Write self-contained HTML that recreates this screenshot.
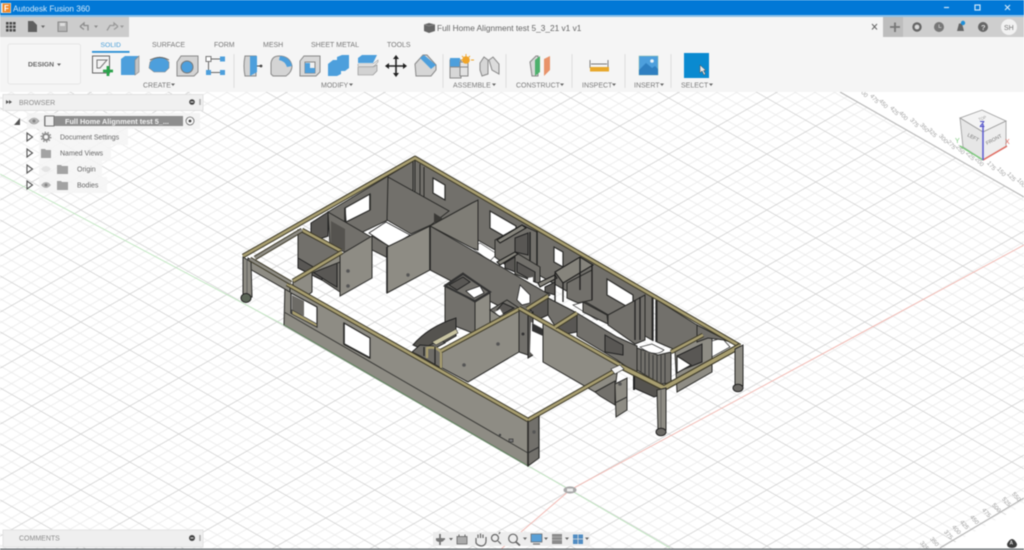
<!DOCTYPE html>
<html><head><meta charset="utf-8"><style>
html,body{margin:0;padding:0;width:1024px;height:550px;overflow:hidden;background:#fff}
svg{position:absolute;left:0;top:0;filter:blur(.45px)}
text{font-family:"Liberation Sans",sans-serif}
.w1{fill:#8e8c84;stroke:#2a2a28;stroke-width:1}
.w2{fill:#72706b;stroke:#2a2a28;stroke-width:1}
.w3{fill:#595754;stroke:#222;stroke-width:1}
.gb{fill:#86847c;stroke:#1f1f1e;stroke-width:1.1}
.h{fill:#fff;stroke:#2a2a28;stroke-width:1.2}
.bo{fill:none;stroke:#3f3b2a;stroke-width:4.6;stroke-linejoin:round}
.bi{fill:none;stroke:#a89e70;stroke-width:2.6;stroke-linejoin:round}
.t{font-size:7px;fill:#7a7a7a}
.r{font-size:6px;fill:#a0a0a0;text-anchor:middle}
.b{fill:#4d9fdc}
</style></head><body>
<svg width="1024" height="550" viewBox="0 0 1024 550">
<defs>
<pattern id="grid" width="50" height="50" patternUnits="userSpaceOnUse" patternTransform="matrix(.98 -.56 .98 .56 570 490)">
<path d="M10 0V50M20 0V50M30 0V50M40 0V50M0 10H50M0 20H50M0 30H50M0 40H50" stroke="#ebebeb" stroke-width=".9" fill="none"/>
<path d="M0 0V50M0 0H50" stroke="#cfcfcf" stroke-width="1.5" fill="none"/>
</pattern>
<clipPath id="gc"><polygon points="-10,-10 680,-10 840,92 1300,355 880,583 -10,583"/></clipPath>
</defs>
<rect width="1024" height="550" fill="#fff"/>
<rect width="1024" height="550" fill="url(#grid)" clip-path="url(#gc)"/>
<path d="M840 92L1024 197M940 548L1024 498" stroke="#b5b5b5" stroke-width="1.1" fill="none"/>
<path d="M500 550L570 490L750 393L1024 245" stroke="#f1b5ae" stroke-width=".9" fill="none"/>
<path d="M0 174L284 325M528 466L570 490L670 548" stroke="#bfe6bf" stroke-width=".9" fill="none"/>

<!-- ruler labels -->
<g class="r">
<text transform="translate(862,94) rotate(50)">500</text><text transform="translate(873,100) rotate(50)">475</text><text transform="translate(882,105) rotate(50)">450</text><text transform="translate(893,112) rotate(50)">425</text><text transform="translate(902,117) rotate(50)">400</text><text transform="translate(913,124) rotate(50)">375</text><text transform="translate(923,129) rotate(50)">350</text><text transform="translate(931,134) rotate(50)">325</text><text transform="translate(942,140) rotate(50)">300</text><text transform="translate(950,146) rotate(50)">275</text><text transform="translate(959,151) rotate(50)">250</text><text transform="translate(969,157) rotate(50)">225</text><text transform="translate(978,163) rotate(50)">200</text><text transform="translate(990,167) rotate(50)">175</text><text transform="translate(1000,173) rotate(50)">150</text><text transform="translate(1010,178) rotate(50)">125</text><text transform="translate(1020,184) rotate(50)">100</text>
<text transform="translate(923,547) rotate(50)">325</text><text transform="translate(933,543) rotate(50)">350</text><text transform="translate(947,536) rotate(50)">375</text><text transform="translate(955,531) rotate(50)">400</text><text transform="translate(963,526) rotate(50)">425</text><text transform="translate(973,521) rotate(50)">450</text><text transform="translate(985,514) rotate(50)">475</text><text transform="translate(995,509) rotate(50)">500</text><text transform="translate(1005,503) rotate(50)">525</text><text transform="translate(1015,498) rotate(50)">550</text>
</g>

<!-- MODEL -->
<g>
<!-- back-right inner face -->
<polygon class="w2" points="415,160 652,296 652,340 415,204"/>
<!-- back-left inner face -->
<polygon class="w2" points="328,212 415,160 415,203 388,220 350,238"/>
<path d="M413 160V193M420 164V197M424 167V200" stroke="#2a2a28" stroke-width="1" fill="none"/>
<polygon class="h" points="345,208 370,194 370,210 346,222"/>
<path d="M345 208V222M370 194V210" stroke="#2a2a28" stroke-width="1.6"/>
<polygon class="h" points="433,178 445,185 445,200 433,193"/>
<polygon class="h" points="490,211 516,226 516,243 490,228"/>
<polygon class="h" points="554,247 563,252 563,267 554,262"/>
<polygon class="h" points="607,279 633,295 633,310 607,295"/>
<!-- left rooms -->
<polygon class="w3" points="311,223 328,212 328,236 311,242"/>
<polygon class="w2" points="328,212 371,237 345,252 330,246"/>
<polygon points="331,221 345,229 345,251 331,245" fill="#55534f"/>
<polygon class="w2" points="388,177 449,211 431,225 411,234 387,220"/>
<polygon points="434,213 442,218 442,226 434,222" fill="#3a3936"/>
<polygon points="369,233 386,222 410,235 390,247" fill="#fff" stroke="#222" stroke-width=".8"/>
<polygon class="w2" points="372,236 392,248 392,260 372,250"/>
<polygon class="w2" points="298,230 340,252 340,292 322,280 298,268"/>
<polygon class="w3" points="298,258 322,272 322,280 298,268"/>
<polygon class="w3" points="313,272 337,262 337,287 330,283"/>
<polygon class="w1" points="340,255 372,236 372,278 340,296"/>
<circle cx="348" cy="271" r="1.8" fill="#555"/><circle cx="348" cy="286" r="1.8" fill="#555"/>
<polygon class="w1" points="293,280 340,253 340,262 312,273 312,292 293,307"/>
<!-- white floor behind long wall -->
<polygon points="472,248 480,243 497,254 490,261" fill="#fff" stroke="#333" stroke-width=".6"/>
<!-- upper middle blocks (grey frames) -->
<polygon class="w2" points="495,240 522,225 537,232 537,282 515,272 495,257"/>
<polygon class="w3" points="515,238 528,233 528,255 515,252"/>
<polygon class="gb" points="497,240 522,225 526,228 500,243"/>
<path d="M530 232V280M537 231V282" stroke="#1f1f1e" stroke-width="1.4"/>
<polygon class="w3" points="505,263 515,257 515,272 505,268"/>
<polygon class="w2" points="515,252 540,267 540,284 515,274"/>
<polygon class="gb" points="497,262 515,252 518,254 500,265"/>
<polygon class="w3" points="517,262 535,272 535,282 517,272"/>
<polygon points="528,278 533,277 533,283 528,281" fill="#fff"/>
<polygon class="w3" points="545,287 555,282 555,295 545,292"/>
<polygon class="gb" points="538,283 555,275 557,278 540,287"/>
<polygon class="w2" points="567,283 592,270 592,300 578,303 567,298"/>
<polygon class="gb" points="555,272 580,257 593,265 563,283"/>
<path d="M555 273V307M563 282V302M580 257V290M592 265V300" stroke="#1f1f1e" stroke-width="1.3"/>
<polygon points="573,305 584,302 607,315 597,320" fill="#fff" stroke="#333" stroke-width=".7"/>
<polygon class="w2" points="583,302 607,315 608,324 583,312"/>
<polygon class="w2" points="608,315 645,295 645,340 635,344 608,325"/>
<path d="M635 300V340M640 297V340M653 298V341M656 300V342" stroke="#222" stroke-width="1.3"/>
<polygon class="w2" points="657,300 697,325 697,345 680,352 657,342"/>
<!-- diagonal wall and long wall -->
<polygon class="w1" points="430,226 472,203 478,200 478,250 472,248" style="fill:#7f7d76"/>
<polygon class="w2" points="430,226 472,250 550,295 522,318 430,270"/>
<polygon points="520,285 530,295 530,303 522,305 517,300" fill="#fff" stroke="#222" stroke-width=".8"/>
<polygon class="w1" points="387,247 430,226 430,270 387,293"/>
<circle cx="408" cy="275" r="1.7" fill="#555"/>
<path d="M430 226V270M387 247V293" stroke="#222" stroke-width="1.6"/>
<!-- rooms behind front right wall -->
<polygon class="w3" points="530,309 548,298 548,315 537,320"/>
<polygon class="w2" points="548,298 575,312 555,326 548,315"/>
<polygon class="w3" points="556,327 577,315 577,332 566,334"/>
<polygon class="w2" points="577,313 617,337 637,346 637,374 617,360 577,336"/>
<polygon class="w3" points="605,335 623,345 623,355 605,352"/>
<!-- bathroom blocks -->
<polygon class="w2" points="445,285 475,302 475,334 445,322"/>
<polygon class="w1" points="475,302 490,293 490,326 475,334"/>
<polygon class="w2" points="463,273 490,292 475,302 445,285"/>
<polygon class="w3" points="449,285 463,277 470,282 457,290"/>
<polygon points="466,291 480,286 484,293 474,298" fill="#fff" stroke="#222" stroke-width=".8"/>
<path d="M445 286L463 274L490 292L475 301Z" fill="none" stroke="#333" stroke-width="2"/>
<polygon class="w2" points="490,310 507,300 519,308 502,318"/>
<polygon class="w3" points="503,303 514,308 503,314 497,310"/>
<polygon points="495,312 500,309 503,314 499,316" fill="#fff"/>
<polygon class="w1" points="490,310 502,318 502,328 490,322"/>
<!-- stairs -->
<path d="M413 345Q428 327 456 318L456 336L428 352Z" fill="#55534f" stroke="#222"/>
<polygon class="w2" points="420,350 440,340 445,343 428,352"/>
<polygon points="432,342 456,329 458,333 436,345" fill="#c9c4a2" stroke="#333" stroke-width=".6"/>
<!-- SE room wall -->
<polygon class="w1" points="442,350 519,310 519,352 468,382 442,368"/>
<circle cx="464" cy="365" r="1.8" fill="#555"/><circle cx="498" cy="344" r="1.8" fill="#555"/>
<!-- right door pier -->
<polygon class="w2" points="519,310 528,315 528,355 519,352"/>
<polygon class="w3" points="528,315 533,312 533,355 528,358"/>
<circle cx="523" cy="334" r="1.5" fill="#333"/>
<polygon points="531,322 543,330 543,365 530,352" fill="#fff"/>
<polygon points="532,323 543,329 543,336 532,331" fill="#333"/>
<polygon class="w1" points="543,323 618,365 616,382 595,392 543,362"/>
<!-- pier & wall -->
<polygon class="w2" points="595,392 615,381 615,405 600,396"/>
<polygon class="w1" points="615,384 627,378 627,410 616,417"/>
<path d="M615 403L627 397" stroke="#333"/>
<circle cx="620" cy="384" r="1.8" fill="#555"/>
<!-- under bay -->
<polygon points="634,372 660,384 660,395 654,397 634,388" fill="#55534f" stroke="#222"/>
<path d="M634 375V390" stroke="#222" stroke-width="2"/>
<!-- curved bay -->
<polygon class="w2" points="637,348 658,355 671,352 671,383 660,384 637,370"/>
<path d="M641 350V372M645 352V375M649 353V378M653 355V380M657 355V382M661 355V383M665 354V383" stroke="#3a3a37" stroke-width="1"/>
<path d="M640 347Q655 358 664 350L652 344Z" fill="#fff" stroke="#333" stroke-width=".7"/>
<!-- right bay window -->
<polygon class="w1" points="675,352 702,337 712,333 712,372 677,392"/>
<polygon class="w3" points="677,356 702,344 702,362 677,372"/>
<polygon class="h" points="677,356 691,365 677,373"/>
<polygon points="712,341 722,338 730,347 712,357" fill="#fff" stroke="#333" stroke-width=".8"/>
<polygon class="w2" points="697,325 730,342 724,340 708,338 697,342"/>
<!-- front wall -->
<polygon class="w1" points="285,283 528,420 528,466 284,325"/>
<path d="M284 312L528 453" stroke="#3c3c39" stroke-width="1"/>
<path d="M284 325L528 466" stroke="#6a8a68" stroke-width="1.2"/>
<polygon class="w2" points="528,420 539,414 539,458 528,466"/>
<path d="M528 420V466" stroke="#2a2a28" stroke-width="1.6"/>
<path d="M539 414V458" stroke="#2a2a28" stroke-width="1.2"/>
<path d="M528 453L539 447" stroke="#333" stroke-width="1"/>
<circle cx="534" cy="432" r="1.7" fill="#555"/>
<polygon points="291,293 317,307 317,327 291,313" fill="#fff" stroke="#2a2a28" stroke-width="1.2"/>
<polygon points="292,295 304,301 304,316 292,312" fill="#6d6b66"/>
<polygon points="292,310 317,324 317,327 292,314" fill="#a89e70" stroke="#333" stroke-width=".7"/>
<polygon class="h" points="344,323 370,338 370,358 344,344"/>
<path d="M344 323V344M344 344L370 358" stroke="#2a2a28" stroke-width="1.6"/>
<circle cx="500" cy="435" r="1.2" fill="#444"/><rect x="509" y="439" width="4" height="3" fill="#777" stroke="#333" stroke-width=".7"/>
<!-- stair opening in front wall -->
<polygon points="412,352 420,356 441,368 441,350 433,346 420,345" fill="#6e6c67" stroke="#222"/>
<path d="M427 358V348Q436 346 441 352V368" fill="none" stroke="#a89e70" stroke-width="2.4"/>
<path d="M424 347V356M435 347V364" stroke="#222" stroke-width="1.2"/>
<!-- left lintel -->
<polygon class="w1" points="248,258 290,282 290,292 248,268"/>
<!-- left column -->
<polygon class="w1" points="243,257 251,262 252,297 243,297"/>
<path d="M247 260V297" stroke="#555" stroke-width=".8"/>
<ellipse cx="246" cy="298" rx="5" ry="4.5" fill="#5c6658" stroke="#222"/>
<!-- beams -->
<polyline class="bo" points="302,230 341,251"/><polyline class="bi" points="302,230 341,251"/>
<polyline class="bo" points="255,258 302,230"/><polyline class="bi" points="255,258 302,230" style="stroke:#8e8c84"/>
<polyline class="bo" points="243,256 415,158 740,346"/><polyline class="bi" points="243,256 415,158 740,346"/>
<polyline class="bo" points="293,281 342,252"/><polyline class="bi" points="293,281 342,252"/>
<polyline class="bo" points="441,351 519,309"/><polyline class="bi" points="441,351 519,309"/>
<polyline class="bo" points="519,308 620,365"/><polyline class="bi" points="519,308 620,365"/>
<polyline class="bo" points="527,309 548,296"/><polyline class="bi" points="527,309 548,296"/>
<polyline class="bo" points="555,327 577,313"/><polyline class="bi" points="555,327 577,313"/>
<polyline class="bo" points="671,352 703,335"/><polyline class="bi" points="671,352 703,335"/>
<polyline class="bo" points="618,369 528,420"/><polyline class="bi" points="618,369 528,420"/>
<polyline class="bo" points="287,284 528,420"/><polyline class="bi" points="287,284 528,420"/>
<polyline class="bo" points="250,259 291,283"/><polyline class="bi" points="250,259 291,283" style="stroke:#8e8c84"/>
<polyline class="bo" points="620,366 664,388 740,346" style="stroke-width:6"/><polyline class="bi" points="620,366 664,388 740,346" style="stroke-width:3.6"/>
<polygon points="611,369 620,365 624,369 615,374" fill="#f4f4f4" stroke="#222" stroke-width=".6"/>
<!-- bay columns -->
<polygon class="w1" points="735,349 743,345 743,386 735,386"/>
<ellipse cx="738" cy="388" rx="5" ry="3.8" fill="#6a6864" stroke="#222"/>
<polygon class="w1" points="657,390 666,388 666,430 658,430"/>
<path d="M661 390V430" stroke="#555" stroke-width=".7"/>
<ellipse cx="661" cy="432" rx="5" ry="3.8" fill="#6a6864" stroke="#222"/>
</g>

<!-- small axis marker -->
<ellipse cx="570" cy="490" rx="6.500" ry="3.600" fill="#a8a8a8"/>
<rect x="567" y="488.600" width="6" height="2.800" fill="#efefef"/>

<!-- title bar & toolbar -->
<rect x="0" y="0" width="1024" height="15" fill="#0278d6"/>
<rect x="0" y="15" width="1024" height="2" fill="#8dc0e8"/>
<rect x="0" y="17" width="1024" height="75" fill="#f5f5f5"/>
<rect x="1" y="3" width="10" height="10" fill="#f1f1f1"/><rect x="2.500" y="3.500" width="8" height="9" fill="#f08a2a"/>
<text x="4" y="11" font-size="8" font-weight="700" fill="#fff">F</text>
<text x="13" y="11.300" font-size="8.200" fill="#d8ebf9">Autodesk Fusion 360</text>
<path d="M944 7.500H949" stroke="#cfe6f8" stroke-width="1.200"/>
<rect x="975" y="5" width="5" height="5" fill="none" stroke="#cfe6f8" stroke-width="1.200"/>
<path d="M1005 5L1010 10M1010 5L1005 10" stroke="#cfe6f8" stroke-width="1.200"/>
<!-- quick bars -->
<rect x="0" y="17" width="129" height="20" fill="#cccccc"/>
<rect x="883" y="17" width="141" height="20" fill="#cecece"/>
<rect x="883" y="17" width="20" height="20" fill="#bdbdbd"/>
<g fill="#4a4a4a"><rect x="6" y="22" width="2.600" height="2.600"/><rect x="9.500" y="22" width="2.600" height="2.600"/><rect x="13" y="22" width="2.600" height="2.600"/><rect x="6" y="25.500" width="2.600" height="2.600"/><rect x="9.500" y="25.500" width="2.600" height="2.600"/><rect x="13" y="25.500" width="2.600" height="2.600"/><rect x="6" y="29" width="2.600" height="2.600"/><rect x="9.500" y="29" width="2.600" height="2.600"/><rect x="13" y="29" width="2.600" height="2.600"/></g>
<path d="M28 21H33L37 25V32H28Z" fill="#5f5f5f"/><path d="M41 25.500H45L43 28Z" fill="#666"/>
<rect x="58" y="22" width="9" height="9.500" fill="#b3b3b3" stroke="#8a8a8a"/><rect x="60" y="23" width="5" height="3" fill="#ddd"/>
<path d="M80 26.500L84 23V25.500H88V30.500M80 26.500L84 29.500" fill="none" stroke="#8c8c8c" stroke-width="1.300"/><path d="M94 25.500H98L96 28Z" fill="#8c8c8c"/>
<path d="M118 26.500L114 23V25.500H110L107 30.500M118 26.500L114 29.500" fill="none" stroke="#9a9a9a" stroke-width="1.300"/><path d="M120 25.500H124L122 28Z" fill="#9a9a9a"/>
<!-- doc title -->
<path d="M424 24.500L429 23L435 24.500V31L429 33L424 31Z" fill="#666"/><path d="M424 24.500L429 26L435 24.500" stroke="#999" fill="none" stroke-width=".6"/>
<text x="437" y="31" font-size="8.300" fill="#666">Full Home Alignment test 5_3_21 v1 v1</text>
<path d="M872 24L877 29.500M877 24L872 29.500" stroke="#666" stroke-width="1"/>
<path d="M895 22.500V32M890 27H900" stroke="#777" stroke-width="1.800"/>
<circle cx="917" cy="27" r="4.700" fill="#666"/><circle cx="917" cy="27" r="2.400" fill="#d8d8d8"/>
<circle cx="939" cy="27" r="5" fill="#777"/><path d="M939 24.500V27.500H941.500" stroke="#ccc" fill="none" stroke-width=".8"/>
<path d="M957 31L959 23.500H962L964 31Z" fill="#666"/><circle cx="963" cy="23" r="2.200" fill="#1f8fd8"/>
<circle cx="983" cy="27" r="5" fill="#666"/><text x="981" y="30" font-size="7.500" font-weight="700" fill="#ddd">?</text>
<circle cx="1009" cy="27" r="8" fill="#f2f2f2"/><text x="1004" y="30" font-size="7" fill="#777">SH</text>

<!-- tabs -->
<text x="100.500" y="47" font-size="6.800" fill="#4a9fd8">SOLID</text>
<rect x="92" y="51" width="37.500" height="1.800" fill="#2a8fd4"/>
<text x="152" y="47" class="t">SURFACE</text><text x="214" y="47" class="t">FORM</text><text x="263" y="47" class="t">MESH</text><text x="311" y="47" class="t">SHEET METAL</text><text x="387" y="47" class="t">TOOLS</text>
<rect x="8" y="44" width="72.500" height="40" rx="2" fill="#f6f6f6" stroke="#e6e6e6"/>
<text x="28" y="66.500" font-size="6.800" font-weight="700" fill="#666">DESIGN</text><path d="M57 63.500H61L59 66Z" fill="#666"/>
<g stroke="#dedede"><path d="M234 54V88M443 54V88M506 54V88M572 54V88M625 54V88M671 54V88"/></g>
<!-- labels -->
<text x="143" y="87.500" class="t">CREATE</text><path d="M171 83.500H175L173 86Z" fill="#666"/>
<text x="321" y="87.500" class="t">MODIFY</text><path d="M349 83.500H353L351 86Z" fill="#666"/>
<text x="453" y="87.500" class="t">ASSEMBLE</text><path d="M492 83.500H496L494 86Z" fill="#666"/>
<text x="516" y="87.500" class="t">CONSTRUCT</text><path d="M560 83.500H564L562 86Z" fill="#666"/>
<text x="582" y="87.500" class="t">INSPECT</text><path d="M612 83.500H616L614 86Z" fill="#666"/>
<text x="634" y="87.500" class="t">INSERT</text><path d="M660 83.500H664L662 86Z" fill="#666"/>
<text x="681" y="87.500" class="t">SELECT</text><path d="M709 83.500H713L711 86Z" fill="#666"/>
<!-- create icons -->
<rect x="92.500" y="56" width="17" height="17" fill="#f4f4f4" stroke="#666" stroke-width="1"/>
<path d="M97 60H107L100 68H97Z" fill="none" stroke="#777"/>
<path d="M108 66V76M103 71H113" stroke="#2aa24a" stroke-width="2.800"/>
<path d="M121 59L125 56H139V72L135 75H121Z" fill="#4d9fdc"/><path d="M135 60V75L139 72V56Z" fill="#c3c3c3" stroke="#888" stroke-width=".6"/>
<path d="M150 62Q160 52 169 62V68L165 72H154L149 68Z" fill="#4d9fdc" stroke="#888" stroke-width=".6"/><path d="M150 60Q160 55 169 60" stroke="#666" fill="none"/>
<path d="M177 62L181 56H198V72L194 76H177Z" fill="#d3d3d3" stroke="#8a8a8a"/><circle cx="187" cy="67" r="6" fill="#4d9fdc" stroke="#777"/>
<rect x="206" y="56.500" width="5" height="5" fill="#fff" stroke="#777"/><rect x="220" y="56.500" width="5" height="5" class="b"/><rect x="206" y="70" width="5" height="5" class="b"/><rect x="220" y="70" width="5" height="5" class="b"/>
<path d="M211 59H220M208.500 62V70M211 72.500H220" stroke="#666" fill="none"/>
<!-- modify icons -->
<path d="M245 56H256V76H245Q243 66 245 56Z" fill="#d3d3d3" stroke="#888"/><path d="M250 56H257V72L250 76Z" fill="#4d9fdc"/><circle cx="261" cy="66" r="1.400" fill="#444"/><path d="M257 66H261" stroke="#444"/>
<path d="M271 74V63Q272 56 279 56Q290 56 292 66Q292 72 286 76H273Z" fill="#d4d4d4" stroke="#888"/><path d="M280 56Q290 57 292 66L287 67Q285 61 279 60Z" class="b"/>
<path d="M300 61L304 56H320V72L316 76H300Z" fill="#d8d8d8" stroke="#888"/><path d="M305 62H315V73H305Z" fill="#f0f0f0" stroke="#888"/><path d="M305 63H310V68H315V73H305Z" class="b"/>
<path d="M328 64L333 60H337V57L342 55H349V68L345 71H341V74L337 76H328Z" class="b"/>
<path d="M358 58L362 55H377L373 63H358Z" class="b"/><path d="M358 64H373L378 60V62L374 66H358Z" fill="#f2f2f2" stroke="#999" stroke-width=".6"/><path d="M358 67H373L377 65V71L373 75H358Z" fill="#d2d2d2" stroke="#888" stroke-width=".6"/>
<path d="M396 56V76M386 66H406" stroke="#222" stroke-width="1.600"/><path d="M393 59L396 55L399 59ZM393 73L396 77L399 73ZM389 63L385 66L389 69ZM403 63L407 66L403 69Z" fill="#222"/>
<path d="M415 64L423 55H427L436 65V70L431 76H416Z" fill="#d6d6d6" stroke="#888"/><path d="M420 58L424 55L436 65L431 69Z" class="b"/>
<!-- assemble -->
<path d="M450 60H461V78H450Z" fill="#d7d7d7" stroke="#888"/><rect x="450" y="58" width="10" height="9" class="b"/><path d="M460 62H468V76H460Z" fill="#e3e3e3" stroke="#888"/><path d="M450 67H468" stroke="#888"/>
<circle cx="466" cy="60" r="3.800" fill="#f0a428"/><path d="M466 54V57M471 60H474M461 60H463M462 56L463.500 57.500M470 56L468.500 57.500" stroke="#f0a428" stroke-width=".9"/>
<path d="M480 63L484 57L488 60V74L482 76L480 70Z" fill="#d6d6d6" stroke="#888"/><path d="M489 60L493 57L499 64V74L492 70Z" fill="#dcdcdc" stroke="#888"/>
<!-- construct -->
<path d="M530 62L536 56L538 56V76H532Z" fill="#d8d8d8" stroke="#888"/><path d="M535 60L540 56V72L535 76Z" fill="#4eb06c"/>
<path d="M544 59L550 56V70L544 76Z" fill="#e8936a"/>
<!-- inspect -->
<path d="M590 60V68M608 60V68M591 64H607" stroke="#777" stroke-width=".9"/>
<rect x="590" y="67" width="19" height="4.500" fill="#e8a82c"/>
<!-- insert -->
<rect x="639" y="56" width="19" height="19" fill="#4d9fdc" stroke="#8ba" stroke-width=".5"/><path d="M639 70L646 63L652 68L655 66L658 69V75H639Z" fill="#2f7fc0"/><circle cx="652" cy="61" r="1.800" fill="#e8f2fa"/>
<!-- select -->
<rect x="684" y="53" width="25" height="25" fill="#0a8ad0"/>
<path d="M700 65V73L702 71L704 75L705.500 74L703.500 70.500H706Z" fill="#e8e8e8" stroke="#444" stroke-width=".5"/>

<!-- browser -->
<rect x="3" y="94.500" width="200" height="16" fill="#f0f0f0" stroke="#e2e2e2"/>
<path d="M9 102L6 100V104ZM12 102L9 100V104Z" fill="#555"/>
<text x="19" y="105" font-size="7" fill="#8d8d8d">BROWSER</text>
<circle cx="192" cy="102" r="2.800" fill="#444"/><rect x="190.500" y="101.500" width="3" height="1" fill="#ddd"/>
<path d="M200 99V105" stroke="#aaa" stroke-width="1.500"/>
<rect x="27" y="113" width="173" height="16" fill="#f2f2f2" opacity=".85"/>
<path d="M14 125L20 118V125Z" fill="#555"/>
<path d="M29 121Q34 115 39 121Q34 127 29 121Z" fill="#bbb" stroke="#999" stroke-width=".6"/><circle cx="34" cy="121" r="1.600" fill="#888"/>
<rect x="44" y="116" width="139" height="10" fill="#8e8e8e"/>
<rect x="45" y="116" width="9" height="10" fill="#eee" stroke="#777"/>
<text x="65" y="124" font-size="7.300" font-weight="700" fill="#f0f0f0">Full Home Alignment test 5_...</text>
<circle cx="190" cy="121" r="4" fill="#f7f7f7" stroke="#666" stroke-width=".8"/><circle cx="190" cy="121" r="1.400" fill="#444"/>
<rect x="39" y="129" width="89" height="16" fill="#f4f4f4" opacity=".85"/>
<rect x="39" y="145" width="72" height="16" fill="#f4f4f4" opacity=".85"/>
<rect x="39" y="161" width="63" height="16" fill="#f4f4f4" opacity=".85"/>
<rect x="39" y="177" width="68" height="16" fill="#f4f4f4" opacity=".85"/>
<g fill="#fff" stroke="#555" stroke-width="1.100"><path d="M27 133V141L32.500 137Z"/><path d="M27 149V157L32.500 153Z"/><path d="M27 165V173L32.500 169Z"/><path d="M27 181V189L32.500 185Z"/></g>
<circle cx="46" cy="137" r="3" fill="none" stroke="#888" stroke-width="2"/><circle cx="46" cy="137" r="4.800" fill="none" stroke="#888" stroke-width="1.200" stroke-dasharray="1.500 1.500"/>
<text x="60" y="139.500" font-size="7" fill="#666">Document Settings</text>
<path d="M41 149H45L46 150H51V158H41Z" fill="#a3a3a3"/>
<text x="60" y="155.500" font-size="7" fill="#666">Named Views</text>
<path d="M41 169Q46 163 51 169Q46 175 41 169Z" fill="#e4e4e4"/>
<path d="M57 165H61L62 166H68V174H57Z" fill="#a3a3a3"/>
<text x="77" y="171.500" font-size="7" fill="#666">Origin</text>
<path d="M41 185Q46 179 51 185Q46 191 41 185Z" fill="#b5b5b5"/><circle cx="46" cy="185" r="1.500" fill="#888"/>
<path d="M57 181H61L62 182H68V190H57Z" fill="#a3a3a3"/>
<text x="77" y="187.500" font-size="7" fill="#666">Bodies</text>

<!-- comments -->
<rect x="3" y="530" width="200" height="17" fill="#efefef" stroke="#e2e2e2"/>
<text x="19" y="540.500" font-size="7" fill="#8d8d8d">COMMENTS</text>
<circle cx="192" cy="538" r="3" fill="#444"/><rect x="190.500" y="537.500" width="3" height="1" fill="#ddd"/>
<path d="M200 535V541" stroke="#aaa" stroke-width="1.500"/>
<rect x="0" y="548.500" width="1024" height="1.500" fill="#6b7074"/>

<!-- nav bar -->
<rect x="433" y="532" width="157" height="14" fill="#ededed"/>
<path d="M440 534V545M436 539H445" stroke="#666" stroke-width="1.500"/><ellipse cx="440" cy="540" rx="4" ry="2" fill="#777"/>
<path d="M449 538H453L451 540.500Z" fill="#666"/>
<rect x="457" y="536.500" width="10" height="7.500" fill="#aaa" stroke="#666" stroke-width=".8"/><path d="M459 534.500V537M465 534.500V537" stroke="#666"/>
<path d="M476 538V543Q478 546 482 546Q486 545 486 541V537M478 538V534.500M480.500 538V533.500M483 538V534.500" fill="none" stroke="#666" stroke-width="1.200"/>
<circle cx="495" cy="538" r="3.500" fill="none" stroke="#666" stroke-width="1.200"/><path d="M498 541L501 544M499 534L500 532" stroke="#666" stroke-width="1.200"/>
<circle cx="513" cy="538.500" r="4.300" fill="none" stroke="#666" stroke-width="1.200"/><path d="M516 542L520 545.500" stroke="#666" stroke-width="1.800"/>
<path d="M523 537.500H527L525 540Z" fill="#666"/>
<rect x="531" y="534" width="11" height="8" fill="#5a9fd6" stroke="#666" stroke-width=".7"/><path d="M533 544H540" stroke="#777" stroke-width="1.300"/>
<path d="M544 537.500H548L546 540Z" fill="#666"/>
<rect x="552" y="534" width="10" height="10" fill="#8a8a8a"/><path d="M552 537H562M552 540H562" stroke="#ccc" stroke-width=".6"/>
<path d="M565 537.500H569L567 540Z" fill="#666"/>
<rect x="573" y="534.500" width="10" height="9.500" fill="#4f8cc2"/><path d="M578 534.500V544M573 539H583" stroke="#ddd" stroke-width=".8"/>
<path d="M585 537.500H589L587 540Z" fill="#666"/>

<!-- view cube -->
<polygon points="960,118 982,110 1006,121 983,132" fill="#f4f4f4" stroke="#9a9a9a" stroke-width=".8"/>
<polygon points="960,118 983,132 983,160 963,147" fill="#e6e6e6" stroke="#9a9a9a" stroke-width=".8"/>
<polygon points="983,132 1006,121 1006,147 983,160" fill="#eeeeee" stroke="#9a9a9a" stroke-width=".8"/>
<path d="M983 160L960 146" stroke="#7cc97c" stroke-width="1.500"/><path d="M983 160L1007 146" stroke="#e06a5f" stroke-width="1.500"/><path d="M983 160V124" stroke="#5a5ad0" stroke-width="1.500"/>
<text x="979.500" y="127" font-size="8.500" font-weight="700" fill="#4f4fc6">Z</text>
<text x="1005" y="144" font-size="7" fill="#e06a5f">X</text>
<text x="955" y="143" font-size="7" fill="#7cc97c">Y</text>
<text transform="translate(967,136) rotate(28)" font-size="5" fill="#777">LEFT</text>
<text transform="translate(987,145) rotate(-28)" font-size="5" fill="#777">FRONT</text>
<text transform="translate(979,121) rotate(-20)" font-size="4" fill="#999">TOP</text>
<path d="M1007 544Q1012 534 1017 544Q1017 548 1012 548Q1007 548 1007 544Z" fill="#3c3c3c"/><text x="1009.500" y="544.500" font-size="5" font-weight="700" fill="#ddd">A</text>
</svg>
</body></html>
